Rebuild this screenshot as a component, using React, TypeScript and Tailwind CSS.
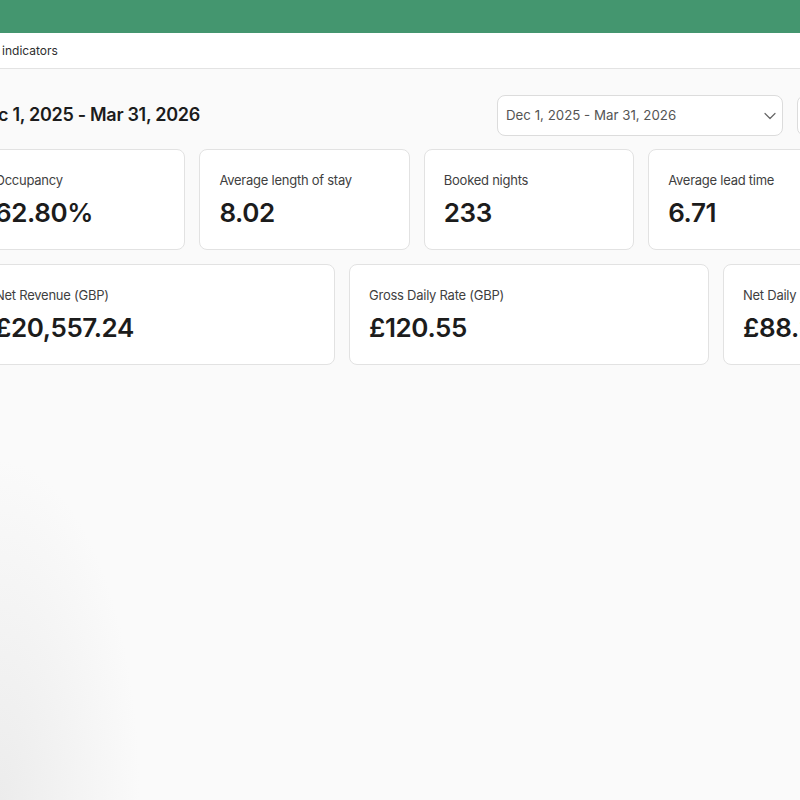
import React from "react";

const row1 = [
  { label: "Occupancy", value: "62.80%" },
  { label: "Average length of stay", value: "8.02" },
  { label: "Booked nights", value: "233" },
  { label: "Average lead time", value: "6.71" },
  { label: "Average daily bookings", value: "1.94" },
];

const row2 = [
  { label: "Net Revenue (GBP)", value: "£20,557.24" },
  { label: "Gross Daily Rate (GBP)", value: "£120.55" },
  { label: "Net Daily Rate (GBP)", value: "£88.23" },
];

function Card({ label, value }: { label: string; value: string }) {
  return (
    <div className="flex flex-col gap-[7px] rounded-lg border border-[#e2e2e2] bg-white py-5 pl-[19px] pr-5">
      <div className="text-[13px] leading-5 tracking-[-0.25px] text-[#3f3f3f] whitespace-nowrap">{label}</div>
      <div className="text-[26px] font-semibold leading-[32px] tracking-[-0.4px] text-[#1c1c1c] whitespace-nowrap">{value}</div>
    </div>
  );
}

export default function App() {
  return (
    <div
      className="h-[800px] w-[800px] overflow-hidden bg-[#fafafa] bg-[radial-gradient(ellipse_140px_340px_at_0%_100%,#ececec,#fafafa)]"
      style={{ fontFamily: "Inter, 'Noto Sans', sans-serif" }}
    >
      <div className="h-[33px] bg-[#44966f]" />
      <div className="flex h-[36px] items-center border-b border-[#e3e3e3] bg-white">
        <div className="ml-[-99px] whitespace-nowrap text-[12px] text-[#2e2e2e]">Key performance indicators</div>
      </div>
      <div className="ml-[-25px] w-[1108px] pt-[26px]">
        <div className="flex h-[41px] items-center justify-between">
          <div className="pb-[3px] whitespace-nowrap text-[18px] font-semibold tracking-[-0.3px] text-[#1c1c1c]">Dec 1, 2025 - Mar 31, 2026</div>
          <div className="flex items-center gap-[14px]">
            <div className="flex h-[41px] w-[286px] items-center justify-between rounded-lg border border-[#dcdcdc] bg-white pl-2 pr-[6px]">
              <span className="text-[13.3px] text-[#555555]">Dec 1, 2025 - Mar 31, 2026</span>
              <svg width="12" height="8" viewBox="0 0 12 8" fill="none" stroke="#666" strokeWidth="1.2" strokeLinecap="round" strokeLinejoin="round">
                <path d="M1 1.5l5 5 5-5" />
              </svg>
            </div>
            <div className="flex h-[41px] w-[286px] items-center rounded-lg border border-[#dcdcdc] bg-white px-3 text-[13.3px] text-[#555555]">
              Compare to
            </div>
          </div>
        </div>
        <div className="mt-[13px] grid grid-cols-5 gap-[14px]">
          {row1.map((c) => (
            <Card key={c.label} {...c} />
          ))}
        </div>
        <div className="mt-[14px] grid grid-cols-3 gap-[14px]">
          {row2.map((c) => (
            <Card key={c.label} {...c} />
          ))}
        </div>
      </div>
    </div>
  );
}
